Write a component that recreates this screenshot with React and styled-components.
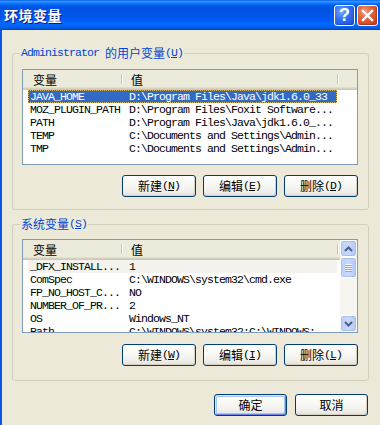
import React from "react";
import styled, { createGlobalStyle } from "styled-components";

const GlobalStyle = createGlobalStyle`
  html, body {
    margin: 0;
    padding: 0;
    background: #ece9d8;
  }
  body {
    font-family: "Noto Sans CJK SC", sans-serif;
    font-size: 12px;
    color: #000;
  }
`;

const Window = styled.div`
  width: 380px;
  height: 425px;
  display: flex;
  flex-direction: column;
  overflow: hidden;
  background: #ece9d8;
`;

const TitleBar = styled.div`
  height: 30px;
  flex-shrink: 0;
  display: flex;
  align-items: center;
  gap: 2px;
  padding: 0 2px 0 4px;
  background: linear-gradient(
    180deg,
    #0058ee 0%,
    #3593ff 4%,
    #288eff 7%,
    #127dff 10%,
    #036ffc 13%,
    #0262ee 17%,
    #0057e5 22%,
    #0054e3 28%,
    #0055eb 56%,
    #005bf5 68%,
    #026afe 80%,
    #0062ef 90%,
    #0052d6 96%,
    #0040ab 100%
  );
`;

const Title = styled.div`
  flex: 1;
  color: #fff;
  font-weight: bold;
  font-size: 14px;
  letter-spacing: 0.5px;
  line-height: 16px;
  text-shadow: 1px 1px 0 #0a1883;
`;

const CaptionButton = styled.div`
  width: 21px;
  height: 21px;
  box-sizing: border-box;
  border: 1px solid #fff;
  border-radius: 3px;
  display: flex;
  align-items: center;
  justify-content: center;
  color: #fff;
  font-family: "Liberation Sans", sans-serif;
  font-weight: bold;
  font-size: 18px;
  background: ${(p) =>
    p.$close
      ? "radial-gradient(circle at 35% 30%, #f0a080 0%, #e26a44 35%, #d2441f 75%, #c23a16 100%)"
      : "radial-gradient(circle at 35% 30%, #7aa6ff 0%, #2f6ff2 45%, #2458e0 80%, #1a48cc 100%)"};
  box-shadow: inset -1px -1px 0 rgba(0, 0, 0, 0.15);
`;

const Body = styled.div`
  flex: 1;
  border-left: 2px solid #0a56e6;
  padding: 16px 11px 0 10px;
  display: flex;
  flex-direction: column;
  gap: 7px;
`;

const Group = styled.fieldset`
  margin: 0;
  min-width: 0;
  border: 1px solid #d0d0bf;
  border-radius: 3px;
  padding: ${(p) => p.$top}px 10px ${(p) => p.$bottom}px 9px;
`;

const Legend = styled.legend`
  height: 14px;
  margin-left: -2px;
  padding: 0 1px;
  display: flex;
  align-items: center;
  white-space: pre;
  line-height: 14px;
  font-size: 12px;
  color: #0046d5;
`;

const Mono = styled.span`
  font-family: "Liberation Mono", monospace;
  font-size: 11.5px;
  letter-spacing: -0.9px;
`;

const ListBox = styled.div`
  height: ${(p) => p.$height}px;
  box-sizing: border-box;
  border: 1px solid #7f9db9;
  background: #fff;
  display: flex;
  overflow: hidden;
`;

const ListMain = styled.div`
  flex: 1;
  min-width: 0;
  display: flex;
  flex-direction: column;
`;

const Header = styled.div`
  height: 20px;
  flex-shrink: 0;
  display: flex;
  background: #ebeadb;
  box-shadow: inset 0 -1px 0 #cbc7b8, inset 0 -2px 0 #d6d2c2,
    inset 0 -3px 0 #e2decd;
`;

const HeaderCell = styled.div`
  position: relative;
  width: ${(p) => p.$width}px;
  box-sizing: border-box;
  padding-left: ${(p) => p.$pad}px;
  padding-bottom: 2px;
  display: flex;
  align-items: center;
  font-size: 12px;

  &::after {
    content: "";
    position: absolute;
    right: 0;
    top: 4px;
    bottom: 6px;
    width: 1px;
    background: #c7c5b2;
    box-shadow: 1px 0 0 #fff;
  }
`;

const Rows = styled.div`
  padding-left: 5px;
  display: flex;
  flex-direction: column;
`;

const Row = styled.div`
  width: 309px;
  height: 13px;
  display: flex;
  align-items: center;
  white-space: nowrap;
  font-family: "Liberation Mono", monospace;
  font-size: 11.5px;
  letter-spacing: -0.9px;
  line-height: 13px;
  color: ${(p) => (p.$selected ? "#fff" : "#000")};
  background: ${(p) =>
    p.$selected ? "#316ac5" : p.$dim ? "#f3f2ec" : "transparent"};
  outline: ${(p) => (p.$selected ? "1px dotted #d6b46a" : "none")};
  outline-offset: -1px;
`;

const NameCell = styled.div`
  width: 94px;
  flex-shrink: 0;
  padding-left: 2px;
  box-sizing: border-box;
`;

const ValueCell = styled.div`
  flex: 1;
  padding-left: 7px;
`;

const ScrollBar = styled.div`
  width: 17px;
  flex-shrink: 0;
  display: flex;
  flex-direction: column;
  background: #f6f5f0;
`;

const ScrollButton = styled.div`
  height: 17px;
  flex-shrink: 0;
  box-sizing: border-box;
  border: 1px solid #fff;
  border-radius: 3px;
  background: linear-gradient(90deg, #bed0f8 0%, #c9d8fb 50%, #b4c8f5 100%);
  box-shadow: inset 0 0 0 1px #a9bff0;
  display: flex;
  align-items: center;
  justify-content: center;
`;

const Thumb = styled(ScrollButton)`
  height: 21px;
  flex-direction: column;
  gap: 1px;
`;

const Grip = styled.div`
  width: 7px;
  height: 1px;
  background: #eef3fe;
  box-shadow: 0 1px 0 #8caae6;
`;

const Track = styled.div`
  flex: 1;
`;

const ButtonRow = styled.div`
  margin-top: ${(p) => p.$gap}px;
  display: flex;
  justify-content: flex-end;
  gap: ${(p) => p.$spacing}px;
`;

const Button = styled.div`
  width: ${(p) => p.$width}px;
  height: 22px;
  box-sizing: border-box;
  border: 1px solid #003c74;
  border-radius: 3px;
  background: linear-gradient(
    180deg,
    #ffffff 0%,
    #f8f8f5 40%,
    #efeeea 80%,
    #e2dfd6 100%
  );
  box-shadow: ${(p) =>
    p.$default
      ? "inset 1px 1px 0 #cee7ff, inset -1px -1px 0 #6982ee, inset 0 0 0 2px #a8c4f0"
      : "inset -1px -1px 0 #d6d0c5"};
  display: flex;
  align-items: center;
  justify-content: center;
  font-size: 12px;
  line-height: 14px;
`;

const Footer = styled.div`
  margin-top: 6px;
  margin-right: 1px;
  display: flex;
  justify-content: flex-end;
  gap: 8px;
`;

const userVars = [
  ["JAVA_HOME", "D:\\Program Files\\Java\\jdk1.6.0_33"],
  ["MOZ_PLUGIN_PATH", "D:\\Program Files\\Foxit Software..."],
  ["PATH", "D:\\Program Files\\Java\\jdk1.6.0_..."],
  ["TEMP", "C:\\Documents and Settings\\Admin..."],
  ["TMP", "C:\\Documents and Settings\\Admin..."],
];

const sysVars = [
  ["_DFX_INSTALL...", "1"],
  ["ComSpec", "C:\\WINDOWS\\system32\\cmd.exe"],
  ["FP_NO_HOST_C...", "NO"],
  ["NUMBER_OF_PR...", "2"],
  ["OS", "Windows_NT"],
  ["Path", "C:\\WINDOWS\\system32;C:\\WINDOWS;"],
];

const Arrow = ({ down }) => (
  <svg width="9" height="6" viewBox="0 0 9 6">
    <path
      d={down ? "M1 1 L4.5 4.5 L8 1" : "M1 5 L4.5 1.5 L8 5"}
      fill="none"
      stroke="#4d6185"
      strokeWidth="2"
    />
  </svg>
);

const VarList = ({ rows, height, scroll, selected, dim }) => (
  <ListBox $height={height}>
    <ListMain>
      <Header>
        <HeaderCell $width={99} $pad={10}>变量</HeaderCell>
        <HeaderCell $width={216} $pad={9}>值</HeaderCell>
      </Header>
      <Rows>
        {rows.map(([name, value], i) => (
          <Row key={name} $selected={i === selected} $dim={i === dim}>
            <NameCell>{name}</NameCell>
            <ValueCell>{value}</ValueCell>
          </Row>
        ))}
      </Rows>
    </ListMain>
    {scroll && (
      <ScrollBar>
        <ScrollButton>
          <Arrow />
        </ScrollButton>
        <Thumb>
          <Grip />
          <Grip />
          <Grip />
          <Grip />
        </Thumb>
        <Track />
        <ScrollButton>
          <Arrow down />
        </ScrollButton>
      </ScrollBar>
    )}
  </ListBox>
);

const Label = ({ text, mnemonic }) => (
  <>
    {text}
    <Mono>
      (<u>{mnemonic}</u>)
    </Mono>
  </>
);

export default function App() {
  return (
    <>
      <GlobalStyle />
      <Window>
        <TitleBar>
          <Title>环境变量</Title>
          <CaptionButton>?</CaptionButton>
          <CaptionButton $close>
            <svg width="13" height="13" viewBox="0 0 13 13">
              <path
                d="M2 2 L11 11 M11 2 L2 11"
                stroke="#fff"
                strokeWidth="2.4"
                strokeLinecap="square"
              />
            </svg>
          </CaptionButton>
        </TitleBar>
        <Body>
          <Group $top={9} $bottom={12}>
            <Legend>
              <Mono>Administrator </Mono>的用户变量
              <Mono>
                (<u>U</u>)
              </Mono>
            </Legend>
            <VarList rows={userVars} height={96} selected={0} />
            <ButtonRow $gap={10} $spacing={7}>
              <Button $width={74}>
                <Label text="新建" mnemonic="N" />
              </Button>
              <Button $width={74}>
                <Label text="编辑" mnemonic="E" />
              </Button>
              <Button $width={74}>
                <Label text="删除" mnemonic="D" />
              </Button>
            </ButtonRow>
          </Group>
          <Group $top={8} $bottom={14}>
            <Legend>
              系统变量
              <Mono>
                (<u>S</u>)
              </Mono>
            </Legend>
            <VarList rows={sysVars} height={94} scroll dim={0} />
            <ButtonRow $gap={11} $spacing={7}>
              <Button $width={74}>
                <Label text="新建" mnemonic="W" />
              </Button>
              <Button $width={74}>
                <Label text="编辑" mnemonic="I" />
              </Button>
              <Button $width={74}>
                <Label text="删除" mnemonic="L" />
              </Button>
            </ButtonRow>
          </Group>
          <Footer>
            <Button $width={73} $default>
              确定
            </Button>
            <Button $width={73}>取消</Button>
          </Footer>
        </Body>
      </Window>
    </>
  );
}
